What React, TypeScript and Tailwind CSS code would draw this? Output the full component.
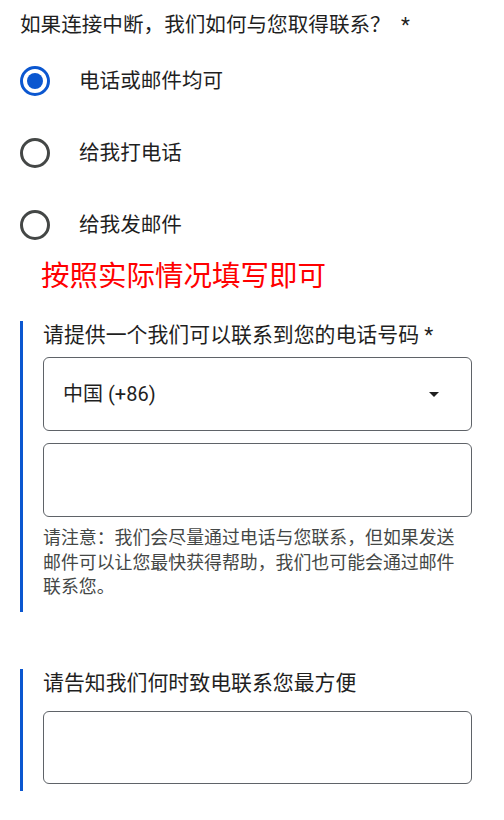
const sans = "font-['Roboto','Noto_Sans_CJK_SC',sans-serif]";

const options = [
  { label: "电话或邮件均可", checked: true },
  { label: "给我打电话", checked: false },
  { label: "给我发邮件", checked: false },
];

function Radio({ checked }: { checked: boolean }) {
  return (
    <span
      className={
        checked
          ? "flex h-[30px] w-[30px] shrink-0 items-center justify-center rounded-full border-[3px] border-[#0b57d0]"
          : "flex h-[30px] w-[30px] shrink-0 items-center justify-center rounded-full border-[3px] border-[#444746]"
      }
    >
      {checked && <span className="h-[16px] w-[16px] rounded-full bg-[#0b57d0]" />}
    </span>
  );
}

export default function App() {
  return (
    <div className={`min-h-[820px] w-[504px] bg-white pl-[20px] pr-[32px] text-[#1f1f1f] ${sans}`}>
      <div className="pt-[11px] text-[20.6px] leading-[28px]">
        如果连接中断，我们如何与您取得联系？&nbsp;&nbsp;*
      </div>

      <div className="mt-[6px] flex flex-col">
        {options.map((o) => (
          <label key={o.label} className="flex h-[72px] items-center gap-[29px]">
            <Radio checked={o.checked} />
            <span className="text-[20.6px] leading-[28px]">{o.label}</span>
          </label>
        ))}
      </div>

      <div className="pl-[21px] text-[28.5px] leading-[32px] text-[#ff0000] font-['Liberation_Serif','Noto_Sans_CJK_SC',serif]">
        按照实际情况填写即可
      </div>

      <section className="mt-[28px] border-l-[3px] border-[#0b57d0] pb-[12px] pl-[20px]">
        <div className="text-[20.9px] leading-[28px]">请提供一个我们可以联系到您的电话号码 *</div>
        <div className="mt-[8px] flex h-[74px] items-center justify-between rounded-[6px] border border-[#5f6368] pl-[19px] pr-[32px]">
          <span className="text-[20px]">中国 (+86)</span>
          <svg width="10" height="5" viewBox="0 0 10 5">
            <path d="M0 0h10L5 5z" fill="#1f1f1f" />
          </svg>
        </div>
        <div className="mt-[12px] h-[74px] rounded-[6px] border border-[#5f6368]" />
        <p className="mt-[9px] text-[17.9px] leading-[24.5px] text-[#444746]">
          请注意：我们会尽量通过电话与您联系，但如果发送邮件可以让您最快获得帮助，我们也可能会通过邮件联系您。
        </p>
      </section>

      <section className="mt-[57px] border-l-[3px] border-[#0b57d0] pb-[7px] pl-[20px]">
        <div className="text-[20.9px] leading-[28px]">请告知我们何时致电联系您最方便</div>
        <div className="mt-[14px] h-[73px] rounded-[6px] border border-[#5f6368]" />
      </section>
    </div>
  );
}
